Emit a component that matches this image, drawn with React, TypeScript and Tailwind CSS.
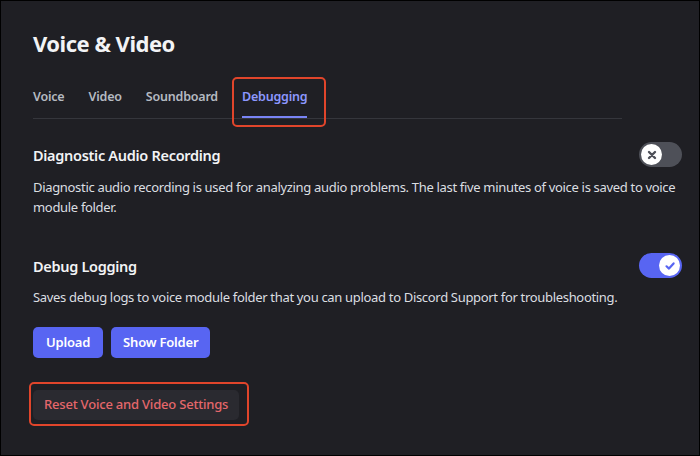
import { useState } from 'react';

const font = { fontFamily: '"Noto Sans", "Liberation Sans", sans-serif' };

function Toggle({ on, onClick }: { on: boolean; onClick: () => void }) {
  return (
    <button
      onClick={onClick}
      className={`relative flex h-[25px] w-[43px] shrink-0 items-center rounded-full px-[2px] ${
        on ? 'justify-end bg-[#5865f2]' : 'justify-start bg-[#4e5058]'
      }`}
    >
      <span className="flex h-[21px] w-[21px] items-center justify-center rounded-full bg-white">
        {on ? (
          <svg width="12" height="12" viewBox="0 0 12 12" fill="none">
            <path d="M2.5 6.3 L5 8.6 L9.6 3.4" stroke="#5865f2" strokeWidth="2.2" strokeLinecap="round" strokeLinejoin="round" />
          </svg>
        ) : (
          <svg width="12" height="12" viewBox="0 0 12 12" fill="none">
            <path d="M3 3 L9 9 M9 3 L3 9" stroke="#4e5058" strokeWidth="2.4" strokeLinecap="round" />
          </svg>
        )}
      </span>
    </button>
  );
}

export default function App() {
  const [tab, setTab] = useState('Debugging');
  const [recording, setRecording] = useState(false);
  const [logging, setLogging] = useState(true);
  const tabs = ['Voice', 'Video', 'Soundboard', 'Debugging'];

  return (
    <div className="h-[456px] w-[700px] overflow-hidden border border-black bg-[#1f1f24] pl-[32px] pr-[17px]" style={font}>
      {/* 見出し */}
      <h1 className="pt-[27px] text-[22px] font-bold leading-[30px] tracking-[-0.5px] text-[#f2f3f5]">Voice &amp; Video</h1>

      {/* タブ */}
      <div className="mt-[29px] flex w-[589px] gap-[24px] border-b border-[#35363c]">
        {tabs.map((t) => (
          <button
            key={t}
            onClick={() => setTab(t)}
            className={`relative border-b-2 pb-[9px] text-[12.5px] font-semibold leading-[20px] tracking-[-0.2px] ${
              tab === t ? 'border-[#7984f5] text-[#8d98ff]' : 'border-transparent text-[#b5bac1]'
            }`}
          >
            {t}
            {t === 'Debugging' && (
              <span className="pointer-events-none absolute -bottom-[11px] -left-[10px] -right-[19px] -top-[10px] rounded-[5px] border-[2.5px] border-[#e0452b]" />
            )}
          </button>
        ))}
      </div>

      {/* 診断用オーディオ録音 */}
      <div className="mt-[23px] flex items-center justify-between">
        <h2 className="text-[14.5px] font-semibold leading-[24px] tracking-[-0.3px] text-[#f2f3f5]">Diagnostic Audio Recording</h2>
        <Toggle on={recording} onClick={() => setRecording(!recording)} />
      </div>
      <p className="mt-[10px] text-[13px] leading-[20px] tracking-[-0.32px] text-[#dbdee1]">
        Diagnostic audio recording is used for analyzing audio problems. The last five minutes of voice is saved to voice module folder.
      </p>

      {/* デバッグログ */}
      <div className="mt-[36px] flex items-center justify-between">
        <h2 className="text-[14.5px] font-semibold leading-[24px] tracking-[-0.3px] text-[#f2f3f5]">Debug Logging</h2>
        <Toggle on={logging} onClick={() => setLogging(!logging)} />
      </div>
      <p className="mt-[9px] text-[13px] leading-[20px] tracking-[-0.32px] text-[#dbdee1]">
        Saves debug logs to voice module folder that you can upload to Discord Support for troubleshooting.
      </p>

      <div className="mt-[20px] flex gap-[8px]">
        <button className="h-[31px] rounded-[5px] bg-[#5865f2] px-[13px] text-[13px] font-semibold tracking-[-0.2px] text-white">Upload</button>
        <button className="h-[31px] rounded-[5px] bg-[#5865f2] px-[12px] text-[13px] font-semibold tracking-[-0.2px] text-white">Show Folder</button>
      </div>

      <div className="relative mt-[32px] inline-block">
        <button className="h-[30px] rounded-[5px] bg-[#2a2a30] px-[11px] text-[13px] font-medium tracking-[-0.2px] text-[#e5676b]">
          Reset Voice and Video Settings
        </button>
        <span className="pointer-events-none absolute -bottom-[6px] -left-[4px] -right-[10px] -top-[8px] rounded-[5px] border-[2.5px] border-[#e0452b]" />
      </div>
    </div>
  );
}
